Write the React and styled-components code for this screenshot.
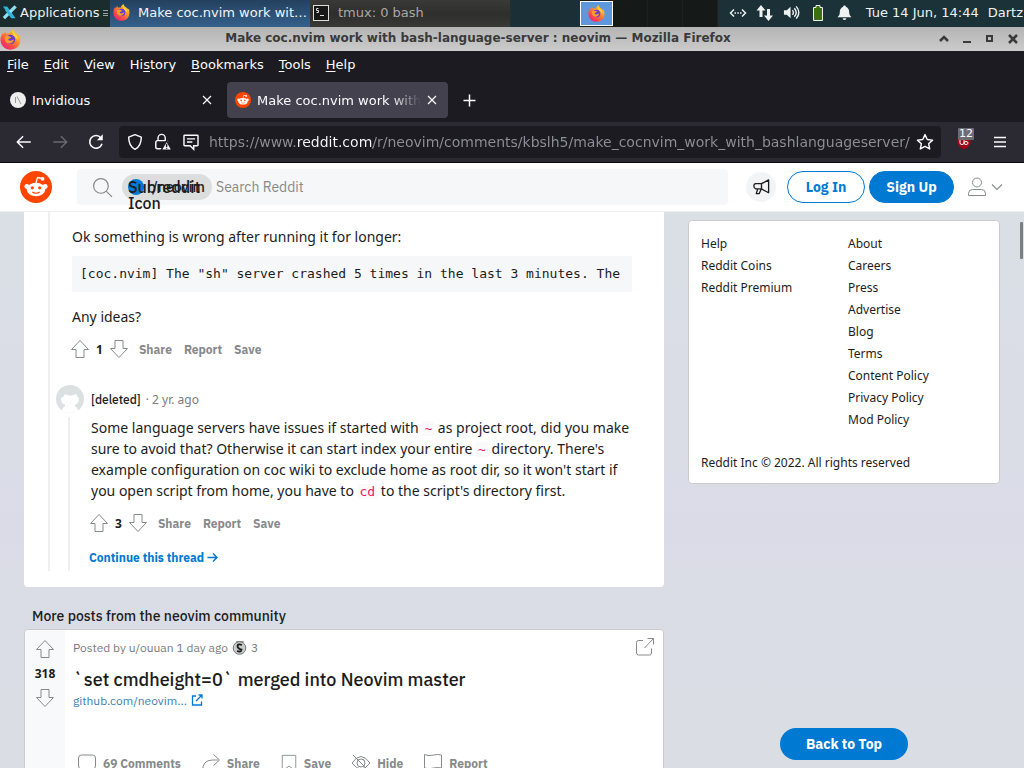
import React from "react";
import styled, { createGlobalStyle } from "styled-components";

const desk = '"DejaVu Sans", sans-serif';
const noto = '"Noto Sans", sans-serif';
const plex = '"IBM Plex Sans", Roboto, sans-serif';
const mono = '"DejaVu Sans Mono", monospace';

const Global = createGlobalStyle`
  *, *::before, *::after { box-sizing: border-box; }
  body { margin: 0; font-family: ${noto}; color: #1c1c1c; }
  button { border: 0; padding: 0; background: none; color: inherit; font: inherit; cursor: pointer; white-space: nowrap; }
  input { border: 0; padding: 0; outline: 0; background: none; font: inherit; }
  a { color: inherit; text-decoration: none; }
  p, h2, h3, ul, pre { margin: 0; padding: 0; }
  ul { list-style: none; }
  svg { display: block; flex: none; }
`;

const Screen = styled.div`
  display: flex;
  flex-direction: column;
  height: 100vh;
  overflow: hidden;
`;

/* Desktop panel */
const Panel = styled.header`
  display: flex;
  flex: none;
  align-items: center;
  height: 27px;
  background: linear-gradient(90deg, #1b2b2d, #1c3036 40%, #1a3238);
  color: #eef2f2;
  font: 13px ${desk};
`;
const AppsButton = styled.button`
  display: flex;
  align-items: center;
  gap: 3px;
  width: 110px;
  height: 27px;
  padding: 0 0 2px 2px;
`;
const Task = styled.button`
  display: flex;
  align-items: center;
  gap: ${(p) => (p.$active ? "8px" : "9px")};
  width: 200px;
  height: 27px;
  padding: 0 0 2px 3px;
  color: ${(p) => (p.$active ? "#f2f5f8" : "#a9a9a6")};
  background: ${(p) =>
    p.$active ? "linear-gradient(#24415f, #35608b)" : "linear-gradient(#3a3a38, #2e2e2d 50%, #383836)"};
`;
const TaskLabel = styled.span`
  overflow: hidden;
  text-overflow: ellipsis;
`;
const Pager = styled.div`
  display: flex;
  width: 138px;
  height: 27px;
  margin-left: 70px;
  background: #151a19;
`;
const Desk = styled.button`
  display: flex;
  align-items: center;
  justify-content: center;
  width: 35px;
  height: 27px;
  border-right: 1px solid #20201f;
  ${(p) => p.$current && "width: 33px; height: 25px; margin: 1px 0; background: #5f97dc; border: 1px solid #fff;"}
`;
const Tray = styled.div`
  display: flex;
  flex: 1;
  align-items: center;
  justify-content: flex-end;
  gap: 9px;
  padding: 0 1px 2px 0;
  white-space: nowrap;
`;
const Clock = styled.span`
  margin-left: 4px;
`;

/* Window frame */
const TitleBar = styled.div`
  display: flex;
  flex: none;
  align-items: center;
  height: 24px;
  padding-right: 4px;
  background: linear-gradient(#b4b4b4, #cbcbcb);
  color: #3a3a3a;
`;
const Title = styled.span`
  flex: 1;
  overflow: hidden;
  padding-right: 2px;
  font: bold 12px/20px ${desk};
  text-align: center;
  white-space: nowrap;
  height: 22px;
`;
const WindowButtons = styled.div`
  display: flex;
  gap: 9px;
`;

const MenuBar = styled.nav`
  display: flex;
  flex: none;
  gap: 15px;
  align-items: center;
  height: 27px;
  padding: 0 7px;
  background: #1c1b22;
  color: #fbfbfe;
  font: 13px ${desk};
  u { text-underline-offset: 2px; }
`;
const TabStrip = styled.div`
  display: flex;
  flex: none;
  align-items: center;
  height: 44px;
  padding: 0 4px;
  background: #1c1b22;
  color: #fbfbfe;
`;
const Tab = styled.div`
  display: flex;
  align-items: center;
  gap: 6px;
  width: ${(p) => (p.$active ? "221px" : "223px")};
  height: 36px;
  padding: ${(p) => (p.$active ? "0 11px 0 8px" : "0 15px 0 6px")};
  border-radius: 4px;
  background: ${(p) => (p.$active ? "#42414d" : "transparent")};
  font: 13px ${desk};
`;
const TabLabel = styled.span`
  flex: 1;
  overflow: hidden;
  white-space: nowrap;
  ${(p) => p.$fade && "mask-image: linear-gradient(90deg, #000 82%, transparent);"}
`;
const NewTab = styled.button`
  margin-left: 15px;
`;
const ToolBar = styled.div`
  display: flex;
  flex: none;
  align-items: center;
  height: 41px;
  padding: 0 16px 0 15px;
  border-bottom: 1px solid #0c0c0d;
  background: #2b2a33;
  color: #fbfbfe;
`;
const NavButtons = styled.div`
  display: flex;
  gap: 18px;
`;
const UrlBar = styled.div`
  display: flex;
  flex: 1;
  align-items: center;
  gap: 4px;
  height: 32px;
  margin: 0 15px 0 14px;
  padding: 0 7px;
  border-radius: 4px;
  background: #1c1b22;
`;
const SiteInfo = styled.div`
  display: flex;
  gap: 10px;
  margin-right: 5px;
`;
const UrlInput = styled.input`
  flex: 1;
  min-width: 0;
  font: 14px ${desk};
  color: transparent;
  background: linear-gradient(90deg, #8f8f98 88px, #fbfbfe 88px, #fbfbfe 164px, #8f8f98 164px);
  background-clip: text;
`;
const Shield = styled.button`
  position: relative;
  margin-right: 20px;
`;
const Badge = styled.span`
  position: absolute;
  top: -6px;
  left: 2px;
  padding: 0 1px;
  border-radius: 1px;
  background: #6c6c72;
  color: #fff;
  font: 11px/12px ${desk};
`;

/* Page */
const Page = styled.div`
  position: relative;
  display: flex;
  flex: 1;
  flex-direction: column;
  min-height: 0;
  background: linear-gradient(#dae0e6, #dadbe6 60%, #dadee4);
`;
const SiteHeader = styled.header`
  display: flex;
  flex: none;
  align-items: center;
  height: 49px;
  padding: 0 21px 0 20px;
  border-bottom: 1px solid #edeff1;
  background: #fff;
`;
const Search = styled.form`
  display: flex;
  flex: 1;
  align-items: center;
  height: 36px;
  margin: 0 18px 0 25px;
  padding-left: 15px;
  border-radius: 4px;
  background: #f6f7f8;
`;
const Chip = styled.span`
  position: relative;
  display: flex;
  align-items: center;
  gap: 3px;
  width: 90px;
  height: 26px;
  margin: 0 4px 0 9px;
  padding-left: 6px;
  border-radius: 13px;
  background: #dcdddd;
  font: 500 14px ${plex};
`;
const Dot = styled.span`
  width: 16px;
  height: 16px;
  border-radius: 8px;
  background: #0079d3;
`;
const AltText = styled.span`
  position: absolute;
  top: 5px;
  left: 6px;
  width: 16px;
  font: 500 16px/16px ${plex};
`;
const SearchInput = styled.input`
  flex: 1;
  min-width: 0;
  font: 14px ${plex};
  &::placeholder { color: #878a8c; opacity: 1; }
`;
const Round = styled.button`
  display: flex;
  align-items: center;
  justify-content: center;
  width: 30px;
  height: 30px;
  margin-right: 11px;
  border-radius: 15px;
  background: #f3f4f5;
`;
const Pill = styled.button`
  height: 32px;
  min-width: ${(p) => (p.$solid ? "85px" : "78px")};
  border: 1px solid #0079d3;
  border-radius: 16px;
  background: ${(p) => (p.$solid ? "#0079d3" : "#fff")};
  color: ${(p) => (p.$solid ? "#fff" : "#0079d3")};
  font: bold 14px ${plex};
`;
const HeaderActions = styled.div`
  display: flex;
  gap: 4px;
`;
const UserMenu = styled.button`
  display: flex;
  align-items: center;
  gap: 4px;
  margin-left: 13px;
  color: #878a8c;
`;

const Scroller = styled.main`
  display: flex;
  flex: 1;
  gap: 24px;
  align-items: flex-start;
  min-height: 0;
  padding: 0 24px;
  overflow: hidden;
`;
const Column = styled.div`
  flex: 1;
  min-width: 0;
`;
const Thread = styled.section`
  padding: 0 32px 16px 24px;
  border-radius: 0 0 4px 4px;
  background: #fff;
`;
const ThreadLine = styled.div`
  padding: 14px 0 0 6px;
  border-left: 2px solid #edeff1;
`;
const Body = styled.div`
  padding-left: 16px;
`;
const Para = styled.p`
  font: 14px/21px ${noto};
`;
const Pre = styled.pre`
  margin: 9px 0 14px;
  padding: 8px;
  overflow: hidden;
  background: #f6f7f8;
  font: 13px/20px ${mono};
`;
const Code = styled.code`
  padding: 0 2px;
  background: #fafafa;
  color: #ee1569;
  font: 13px/13px ${mono};
`;
const Actions = styled.div`
  display: flex;
  align-items: center;
  gap: 12px;
  height: 24px;
  margin: 10px 0 0 -2px;
  color: #878a8c;
  font: bold 12px ${plex};
`;
const Votes = styled.div`
  display: flex;
  align-items: center;
  gap: 6px;
  margin-right: -2px;
`;
const Score = styled.span`
  color: #1c1c1c;
  font: bold 12px/17px ${noto};
`;
const Reply = styled.article`
  padding-top: 23px;
`;
const Byline = styled.div`
  display: flex;
  align-items: center;
  gap: 7px;
  height: 30px;
  font: 12px ${noto};
`;
const Author = styled.span`
  font: 500 12px ${plex};
`;
const Age = styled.span`
  margin-left: -2px;
  color: #7c7c7c;
`;
const ReplyLine = styled.div`
  margin: 3px 0 0 12px;
  border-left: 2px solid #edeff1;
`;
const ReplyBody = styled.div`
  padding: 0 0 4px 21px;
`;
const ContinueLink = styled.a`
  display: flex;
  align-items: center;
  gap: 3px;
  height: 20px;
  margin: 12px 0 0 -2px;
  color: #0079d3;
  font: bold 12px ${plex};
`;
const MoreTitle = styled.h3`
  padding: 20px 8px 4px;
  font: 500 14px/18px ${plex};
`;
const Post = styled.article`
  display: flex;
  border: 1px solid #ccc;
  border-radius: 4px;
  background: #fff;
`;
const Gutter = styled.div`
  display: flex;
  flex-direction: column;
  align-items: center;
  gap: 6px;
  width: 40px;
  padding-top: 9px;
  border-radius: 4px 0 0 4px;
  background: #f8f9fa;
  color: #878a8c;
`;
const PostBody = styled.div`
  flex: 1;
  padding: 8px;
`;
const PostMeta = styled.div`
  display: flex;
  align-items: center;
  gap: 4px;
  height: 18px;
  color: #787c7e;
  font: 12px ${plex};
`;
const Open = styled.a`
  margin-left: auto;
  color: #878a8c;
`;
const PostTitle = styled.h2`
  margin-top: 13px;
  font: 500 18px/22px ${plex};
`;
const Source = styled.a`
  display: flex;
  align-items: center;
  gap: 4px;
  height: 18px;
  color: #3b7fb5;
  font: 12px ${plex};
`;
const PostActions = styled.div`
  display: flex;
  gap: 20px;
  margin: 44px 0 0 4px;
  color: #878a8c;
  font: bold 12px ${plex};
  button { display: flex; align-items: center; gap: 6px; height: 20px; }
`;
const Side = styled.aside`
  flex: none;
  width: 312px;
  margin-top: 8px;
  padding: 12px 12px 9px;
  border: 1px solid #ccc;
  border-radius: 4px;
  background: #fff;
  font: 12px/22px ${noto};
`;
const Links = styled.div`
  display: grid;
  grid-template-columns: 1fr 1fr;
  column-gap: 8px;
`;
const Legal = styled.p`
  margin-top: 21px;
`;
const Thumb = styled.div`
  position: absolute;
  top: 59px;
  right: 1px;
  width: 3px;
  height: 37px;
  border-radius: 1px;
  background: #7a7f82;
`;
const BackToTop = styled.button`
  position: absolute;
  right: 116px;
  bottom: 8px;
  width: 128px;
  height: 32px;
  border-radius: 16px;
  background: #0079d3;
  color: #fff;
  font: bold 14px ${plex};
`;

const Icon = ({ size = 20, box = 20, w = 1, children, ...rest }) => (
  <svg width={size} height={size} viewBox={`0 0 ${box} ${box}`} fill="none" stroke="currentColor" strokeWidth={w} aria-hidden="true" {...rest}>
    {children}
  </svg>
);

const Firefox = ({ size }) => (
  <svg width={size} height={size} viewBox="0 0 20 20" aria-hidden="true">
    <defs>
      <linearGradient id="fx" x1="1" y1="0" x2="0.2" y2="1">
        <stop offset="0" stopColor="#fff04a" />
        <stop offset="0.4" stopColor="#ff9a26" />
        <stop offset="0.75" stopColor="#ff4848" />
        <stop offset="1" stopColor="#e5227f" />
      </linearGradient>
    </defs>
    <path fill="url(#fx)" d="M12.5 0c.2 2 1.2 2.700 2.600 3.800C17 5 17.600 5.500 18 6.500l.7-.8c1.600 5 .9 13.800-8.500 14C4.500 19.800.6 15.500.5 10.500.4 7.800 1.300 5.300 2.800 3.500l.3 1.800 2-3 .7 2.200c1.200-.5 2.400-.5 3.400-.2C9.500 2.500 10.700 1 12.500 0z" />
    <circle cx="10" cy="10" r="4.500" fill="#6a3fd0" />
    <path fill="#ff9d2c" d="M4.500 7.500c1.500-1 3-1 4.500-.4 1 .4 1.400.7 1.700 1.200-1 .3-1.700.6-2.400 1-.6.5-.6 1.500 1 1.800 1.800.3 2.600-1 3.900-.7-.7 2.400-2.800 3.300-4.500 3.300C5.800 13.700 3.900 10.500 4.500 7.500z" />
    <path fill="#ffd83c" d="M12.500 1.500c.2 2 1.500 2.700 2.700 4 1.500 1.700 2 3.500 1.500 6-.2-1.700-1-3-2.300-3.800-1.900-1.200-3-3.700-1.900-6.200z" />
  </svg>
);

const Snoo = ({ size }) => (
  <svg width={size} height={size} viewBox="0 0 32 32" aria-hidden="true">
    <circle cx="16" cy="16" r="16" fill="#ff4500" />
    <path d="M16 12l1.500-5.500 4.500 1" fill="none" stroke="#fff" strokeWidth="1.300" />
    <circle cx="22.500" cy="7.800" r="1.900" fill="#fff" />
    <circle cx="6.800" cy="15.500" r="2.400" fill="#fff" />
    <circle cx="25.200" cy="15.500" r="2.400" fill="#fff" />
    <ellipse cx="16" cy="18.500" rx="9.300" ry="6.700" fill="#fff" />
    <circle cx="12.300" cy="16.800" r="1.600" fill="#ff4500" />
    <circle cx="19.700" cy="16.800" r="1.600" fill="#ff4500" />
    <path d="M12.300 21c2 1.700 5.400 1.700 7.400 0" fill="none" stroke="#ff4500" strokeWidth="1.100" />
  </svg>
);

const Up = () => <Icon><path d="M10 1.500L18.500 10.500H14V18.500H6V10.500H1.500Z" /></Icon>;
const Down = () => <Icon><path d="M10 18.500L18.500 9.500H14V1.500H6V9.500H1.500Z" /></Icon>;
const Close = () => <Icon size={10} box={10} w={1.200}><path d="M1 1l8 8M9 1L1 9" /></Icon>;

const VoteRow = ({ score }) => (
  <Actions>
    <Votes>
      <button aria-label="Upvote"><Up /></button>
      <Score>{score}</Score>
      <button aria-label="Downvote"><Down /></button>
    </Votes>
    <button>Share</button>
    <button>Report</button>
    <button>Save</button>
  </Actions>
);

const menus = [["", "F", "ile"], ["", "E", "dit"], ["", "V", "iew"], ["Hi", "s", "tory"], ["", "B", "ookmarks"], ["", "T", "ools"], ["", "H", "elp"]];
const helpLinks = ["Help", "Reddit Coins", "Reddit Premium"];
const aboutLinks = ["About", "Careers", "Press", "Advertise", "Blog", "Terms", "Content Policy", "Privacy Policy", "Mod Policy"];
const LinkList = ({ items }) => (
  <ul>{items.map((t) => <li key={t}><a href="#">{t}</a></li>)}</ul>
);

export default function App() {
  return (
    <Screen>
      <Global />
      <Panel>
        <AppsButton>
          <Icon size={15} box={16}>
            <path d="M1 1.500h4.500L14.500 14H10z" fill="#2fb4de" stroke="none" />
            <path d="M14.500 1.500L2 14" stroke="#8fe0f2" strokeWidth="3.500" />
            <path d="M4.500 5l6.500 8" stroke="#2fb4de" strokeWidth="3" />
          </Icon>
          Applications
          <Icon size={6} box={6} style={{ color: "#9aa5a6" }}><path d="M1 0.500h5M1 3.500h5M1 5.500h5" /></Icon>
        </AppsButton>
        <Task $active>
          <Firefox size={17} />
          <TaskLabel>Make coc.nvim work with bash-language-server</TaskLabel>
        </Task>
        <Task>
          <Icon size={16} box={16} style={{ color: "#ddd" }}>
            <rect x="0.500" y="0.500" width="15" height="15" fill="#171717" />
            <path d="M5.500 3.500H3.500v2h2v2h-2M7 10.500h4" />
          </Icon>
          <TaskLabel>tmux: 0 bash</TaskLabel>
        </Task>
        <Pager>
          <Desk $current aria-label="Workspace 1"><Firefox size={17} /></Desk>
          <Desk aria-label="Workspace 2" />
          <Desk aria-label="Workspace 3" />
          <Desk aria-label="Workspace 4" />
        </Pager>
        <Tray>
          <Icon size={18} box={18} w={1.500}><path d="M5 5.500L1.500 9L5 12.500M13 5.500L16.500 9L13 12.500M5.500 9h1.500M8.300 9h1.500M11 9h1.500" /></Icon>
          <Icon size={18} box={18} w={3}><path d="M5 13V5M12.500 5v8" /><path d="M0.500 6.500L5 1L9.500 6.500zM8 11.500L12.500 17L17 11.500z" fill="currentColor" stroke="none" /></Icon>
          <Icon size={17} box={18} w={1.500}><path d="M1 6.500h3L8 3v12L4 11.500H1z" fill="currentColor" stroke="none" /><path d="M10 6.500q2 2.500 0 5M12 4.500q4 4.500 0 9M14 2.500q5.500 6.500 0 13" /></Icon>
          <Icon size={18} box={18}><path d="M4.500 3.500h2.500v-2h4v2h2.500v13h-9z" fill="#3f7010" /></Icon>
          <Icon size={17} box={18}><path d="M9 1.500c1 0 1.500.7 1.500 1.500C13 4 14 6 14 9c0 2.500 1 3.500 2.500 5h-15C3 12.500 4 11.500 4 9c0-3 1-5 3.500-6 0-.8.5-1.500 1.500-1.500zM7 15h4q-.5 2-2 2t-2-2z" fill="currentColor" stroke="none" /></Icon>
          <Clock>Tue 14 Jun, 14:44</Clock>
          <span>Dartz</span>
        </Tray>
      </Panel>

      <TitleBar>
        <Firefox size={21} />
        <Title>Make coc.nvim work with bash-language-server : neovim — Mozilla Firefox</Title>
        <WindowButtons>
          <button aria-label="Shade"><Icon size={14} box={14} w={2.500}><path d="M3 9l4-4 4 4" /></Icon></button>
          <button aria-label="Minimize"><Icon size={14} box={14} w={2}><path d="M3 10h8" /></Icon></button>
          <button aria-label="Maximize"><Icon size={14} box={14} w={2}><rect x="4" y="4" width="5" height="5" /></Icon></button>
          <button aria-label="Close"><Icon size={14} box={14} w={2.500}><path d="M3 3l8 8M11 3l-8 8" /></Icon></button>
        </WindowButtons>
      </TitleBar>
      <MenuBar>
        {menus.map(([a, u, b]) => <button key={u + b}>{a}<u>{u}</u>{b}</button>)}
      </MenuBar>
      <TabStrip>
        <Tab>
          <Icon size={16} box={16}><circle cx="8" cy="8" r="8" fill="#eee" stroke="none" /><path d="M5.500 5v6M7 4.500l4 7.500" stroke="#999" /></Icon>
          <TabLabel>Invidious</TabLabel>
          <button aria-label="Close tab"><Close /></button>
        </Tab>
        <Tab $active>
          <Snoo size={16} />
          <TabLabel $fade>Make coc.nvim work with bash-language-server</TabLabel>
          <button aria-label="Close tab"><Close /></button>
        </Tab>
        <NewTab aria-label="New tab"><Icon size={13} box={13} w={1.500}><path d="M6.500 0.500v12M0.500 6.500h12" /></Icon></NewTab>
      </TabStrip>
      <ToolBar>
        <NavButtons>
          <button aria-label="Back"><Icon size={18} w={1.600}><path d="M17.500 10H3M9 3.500L2.500 10L9 16.500" strokeLinejoin="round" /></Icon></button>
          <button aria-label="Forward" disabled style={{ color: "#6a6972" }}><Icon size={18} w={1.600}><path d="M2.500 10H17M11 3.500L17.500 10L11 16.500" /></Icon></button>
          <button aria-label="Reload"><Icon size={18} w={1.700}><path d="M16.700 12A7 7 0 1 1 15.500 5.500" /><path d="M17.500 1.500v6.500h-6.500z" fill="currentColor" stroke="none" /></Icon></button>
        </NavButtons>
        <UrlBar>
          <SiteInfo>
            <Icon size={18} w={1.600}><path d="M10 1.800L17 4.500C17 11 15.500 15.500 10 18.200C4.500 15.500 3 11 3 4.500Z" strokeLinejoin="round" /></Icon>
            <Icon size={18} w={1.600}>
              <rect x="2" y="8.500" width="13" height="9" rx="2" /><path d="M4.500 8.500V5.500a4 4 0 0 1 8 0v3" />
              <path d="M14 8.500L20 19H8z" fill="#fbfbfe" stroke="#1c1b22" /><path d="M14 12v3.500M14 16.500v1" stroke="#1c1b22" />
            </Icon>
            <Icon size={18} w={1.600}><path d="M3 2.500h14q.8 0 .8.800v10q0 .8-.8.800h-4v4l-4-4H3q-.8 0-.8-.8v-10q0-.8.800-.8zM5.500 6.500h9M5.500 10h6" /></Icon>
          </SiteInfo>
          <UrlInput aria-label="Address" defaultValue="https://www.reddit.com/r/neovim/comments/kbslh5/make_cocnvim_work_with_bashlanguageserver/" />
          <button aria-label="Bookmark this page"><Icon size={18} w={1.600}><path d="M10 1.800l2.500 5.400 5.900.7-4.400 4 1.200 5.800-5.200-2.900-5.200 2.900 1.200-5.800-4.400-4 5.900-.7z" strokeLinejoin="round" /></Icon></button>
        </UrlBar>
        <Shield aria-label="uBlock Origin">
          <Icon size={16} box={16}><path d="M8 0.500l6.500 2.500v5q0 5-6.500 7.500Q1.500 13 1.500 8V3z" fill="#a00714" stroke="none" /><path d="M4 6v3q0 1.500 2 1.500t2-1.500V6M8 9q0 1.500 2 1.500t2-1.500-2-1.500-2 1.500" /></Icon>
          <Badge>12</Badge>
        </Shield>
        <button aria-label="Menu"><Icon size={16} box={16} w={1.300}><path d="M2 3.500h12M2 8h12M2 12.500h12" /></Icon></button>
      </ToolBar>

      <Page>
        <SiteHeader>
          <a href="#" aria-label="Reddit home"><Snoo size={32} /></a>
          <Search onSubmit={(e) => e.preventDefault()}>
            <Icon size={21} w={1.100} style={{ color: "#878a8c" }}><circle cx="8.500" cy="8.500" r="7" /><path d="M13.500 13.500l5.500 5.500" /></Icon>
            <Chip><Dot />r/neovim<AltText>Subreddit Icon</AltText></Chip>
            <SearchInput aria-label="Search Reddit" placeholder="Search Reddit" />
          </Search>
          <Round aria-label="Advertise">
            <Icon size={19} w={1.400}><path d="M10 6H4q-2 0-2 2.500T4 11.500h6l7.500 4V2zM10 6v5.500M6 11.500l-1.500 5h3l2-4.500" strokeLinejoin="round" /></Icon>
          </Round>
          <HeaderActions>
            <Pill>Log In</Pill>
            <Pill $solid>Sign Up</Pill>
          </HeaderActions>
          <UserMenu aria-label="User menu">
            <Icon><circle cx="10" cy="5.500" r="4.500" /><path d="M1.500 18.500v-2q0-4 4-4h9q4 0 4 4v2z" /></Icon>
            <Icon size={12} box={12} w={1.100}><path d="M1 3.500l5 5 5-5" /></Icon>
          </UserMenu>
        </SiteHeader>

        <Scroller>
          <Column>
            <Thread>
              <ThreadLine>
                <Body>
                  <Para>Ok something is wrong after running it for longer:</Para>
                  <Pre>[coc.nvim] The "sh" server crashed 5 times in the last 3 minutes. The</Pre>
                  <Para>Any ideas?</Para>
                  <VoteRow score="1" />
                </Body>
                <Reply>
                  <Byline>
                    <Icon size={28} box={28}>
                      <circle cx="14" cy="14" r="14" fill="#dbe0e0" stroke="none" />
                      <path d="M5 13q3-1 4-4 5 3 11 0 1 3 3 4 0 6-4 6.500v2q3 1 3 4.500-4 2-8 2t-8-2q0-3.500 3-4.500v-2Q5 19 5 13z" fill="#fff" stroke="none" />
                    </Icon>
                    <Author>[deleted]</Author>
                    <Age>· 2 yr. ago</Age>
                  </Byline>
                  <ReplyLine>
                    <ReplyBody>
                      <Para>
                        Some language servers have issues if started with <Code>~</Code> as project root, did you make sure to avoid that? Otherwise it can start index your entire <Code>~</Code> directory. There's example configuration on coc wiki to exclude home as root dir, so it won't start if you open script from home, you have to <Code>cd</Code> to the script's directory first.
                      </Para>
                      <VoteRow score="3" />
                      <ContinueLink href="#">
                        Continue this thread
                        <Icon size={11} box={11} w={1.500}><path d="M0.500 5.500h9M6 1.500l4 4-4 4" /></Icon>
                      </ContinueLink>
                    </ReplyBody>
                  </ReplyLine>
                </Reply>
              </ThreadLine>
            </Thread>

            <MoreTitle>More posts from the neovim community</MoreTitle>
            <Post>
              <Gutter>
                <button aria-label="Upvote"><Up /></button>
                <Score>318</Score>
                <button aria-label="Downvote"><Down /></button>
              </Gutter>
              <PostBody>
                <PostMeta>
                  Posted by u/ouuan 1 day ago
                  <svg width="15" height="15" viewBox="0 0 15 15" role="img" aria-label="Silver award">
                    <path d="M4 1h8l-1 3H5z" fill="#999" />
                    <circle cx="7.500" cy="8" r="6.300" fill="#c9cccd" stroke="#777" />
                    <path d="M10 5Q5.500 3.500 5.500 6T9.500 9.500Q9.500 12.500 5 11" fill="none" stroke="#1c1c1c" strokeWidth="1.800" />
                  </svg>
                  3
                  <Open href="#" aria-label="Open link"><Icon><path d="M8 3.500H3.500q-2 0-2 2V16q0 2 2 2H14.500q2 0 2-2V11.500M9.500 11L18.500 1.500M12.500 1.500h6v6" /></Icon></Open>
                </PostMeta>
                <PostTitle>`set cmdheight=0` merged into Neovim master</PostTitle>
                <Source href="#">
                  github.com/neovim...
                  <Icon size={12} box={12} w={1.300} style={{ color: "#0079d3" }}><path d="M5 2H1.500v9h9V7.500M5 7l6-6M7.500 1H11v3.500" /></Icon>
                </Source>
                <PostActions>
                  <button><Icon><rect x="1.500" y="2" width="17" height="14" rx="3" /></Icon>69 Comments</button>
                  <button><Icon><path d="M1.500 18q0-11 10-11H17M12.500 1.500L18.500 7l-6 5.500" /></Icon>Share</button>
                  <button><Icon size={18}><path d="M2.500 1.500h15v17l-7.500-5-7.500 5z" /></Icon>Save</button>
                  <button><Icon><path d="M1 10q9-13 18 0-9 12-18 0zM2 2l16 16" /><circle cx="10" cy="10" r="4" /></Icon>Hide</button>
                  <button><Icon><path d="M1.500 19V1.500q4.500 2 9 .5 4-1 8 0v13q-4-1-8 0-4.500 1.500-9 0" /></Icon>Report</button>
                </PostActions>
              </PostBody>
            </Post>
          </Column>
          <Side>
            <Links>
              <LinkList items={helpLinks} />
              <LinkList items={aboutLinks} />
            </Links>
            <Legal>Reddit Inc © 2022. All rights reserved</Legal>
          </Side>
        </Scroller>
        <Thumb />
        <BackToTop>Back to Top</BackToTop>
      </Page>
    </Screen>
  );
}
